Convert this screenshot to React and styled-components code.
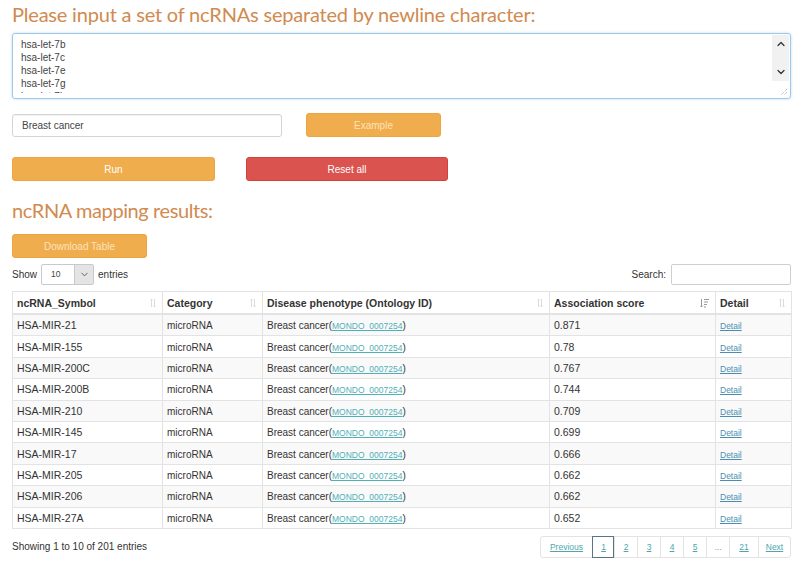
import React from 'react';
import styled, { createGlobalStyle } from 'styled-components';
import { ChevronUp, ChevronDown } from 'lucide-react';

const GlobalStyle = createGlobalStyle`
  body {
    margin: 0;
    background: #fff;
    font-family: "Liberation Sans", Arial, sans-serif;
    color: #333;
  }
`;

const Page = styled.div`
  width: 779px;
  padding: 3px 0 0 12px;
  display: flex;
  flex-direction: column;
`;

const Heading = styled.h2`
  font-family: "Lato", "Open Sans", sans-serif;
  font-weight: 400;
  font-size: 20px;
  line-height: 22px;
  color: #d18a4f;
  margin: ${(p) => p.$mt || 0}px 0 0 0;
  letter-spacing: ${(p) => p.$spacing || 0}px;
`;

const TextBox = styled.div`
  margin-top: 8px;
  height: 64px;
  border: 1px solid #9fc8e6;
  border-radius: 3px;
  box-shadow: 0 0 3px rgba(102, 175, 233, 0.45);
  display: flex;
  align-items: flex-start;
  position: relative;
  overflow: hidden;
`;

const TextLines = styled.div`
  flex: 1;
  margin-top: 4px;
  height: 55px;
  padding: 0 8px;
  font-size: 10px;
  line-height: 13px;
  color: #444;
  white-space: pre;
  overflow: hidden;
`;

const ScrollBar = styled.div`
  width: 17px;
  height: 46px;
  margin: 1px 1px 0 0;
  background: #f1f1f1;
  display: flex;
  flex-direction: column;
  justify-content: space-between;
  align-items: center;
  padding: 3px 0;
  box-sizing: border-box;
  color: #333;
`;

const Grip = styled.svg`
  position: absolute;
  right: 2px;
  bottom: 2px;
`;

const Row = styled.div`
  display: flex;
  align-items: center;
  gap: ${(p) => p.$gap}px;
  margin-top: ${(p) => p.$mt}px;
`;

const TextInput = styled.div`
  width: 270px;
  height: 23px;
  box-sizing: border-box;
  border: 1px solid #d4d4d4;
  border-radius: 3px;
  font-size: 10px;
  line-height: 21px;
  padding-left: 9px;
  color: #444;
  box-shadow: inset 0 1px 1px rgba(0, 0, 0, 0.06);
`;

const Button = styled.div`
  width: ${(p) => p.$w}px;
  height: 24px;
  box-sizing: border-box;
  border-radius: 3px;
  background: ${(p) => (p.$danger ? '#da534f' : '#f0ad4e')};
  border: 1px solid ${(p) => (p.$danger ? '#d43f3a' : '#eea43f')};
  color: ${(p) => (p.$faded ? '#fde2bd' : '#fff')};
  font-size: 10px;
  line-height: 23px;
  text-align: center;
`;

const Toolbar = styled.div`
  display: flex;
  justify-content: space-between;
  align-items: center;
  margin-top: 6px;
  font-size: 10px;
  color: #333;
`;

const Inline = styled.div`
  display: flex;
  align-items: center;
  gap: ${(p) => p.$gap || 5}px;
`;

const Select = styled.div`
  width: 53px;
  height: 21px;
  box-sizing: border-box;
  border: 1px solid #c9c9c9;
  border-radius: 2px;
  display: flex;
  font-size: 8.5px;
  color: #444;
`;

const SelectValue = styled.div`
  flex: 1;
  padding-left: 9px;
  line-height: 19px;
`;

const SelectArrow = styled.div`
  width: 18px;
  background: #e4e4e4;
  border-left: 1px solid #c9c9c9;
  display: flex;
  align-items: center;
  justify-content: center;
  color: #555;
`;

const SearchBox = styled.div`
  width: 120px;
  height: 21px;
  box-sizing: border-box;
  border: 1px solid #cfcfcf;
  border-radius: 2px;
`;

const Table = styled.table`
  margin-top: 6px;
  width: 779px;
  border-collapse: collapse;
  table-layout: fixed;
  font-size: 10.5px;
  color: #333;
`;

const Th = styled.th`
  height: 21px;
  border: 1px solid #e3e3e3;
  border-bottom: 2px solid #e3e3e3;
  text-align: left;
  padding: 0 4px;
  font-weight: 700;
  position: relative;
`;

const SortIcon = styled.svg`
  position: absolute;
  right: 6px;
  top: 6px;
`;

const Td = styled.td`
  height: 20.4px;
  border: 1px solid #e3e3e3;
  padding: 0 4px;
  background: ${(p) => (p.$odd ? '#f9f9f9' : '#fff')};
  white-space: nowrap;
  overflow: hidden;
`;

const Phrase = styled.span`
  font-size: 10px;
`;

const SmallLink = styled.a`
  font-size: 8.5px;
  color: ${(p) => p.$color || '#4fb0b8'};
  text-decoration: underline;
`;

const Footer = styled.div`
  display: flex;
  justify-content: space-between;
  align-items: center;
  margin-top: 7px;
  font-size: 10px;
`;

const Pager = styled.div`
  display: flex;
  border: 1px solid #e3e3e3;
  border-radius: 3px;
  height: 22px;
  box-sizing: border-box;
`;

const PageItem = styled.div`
  width: ${(p) => p.$w}px;
  box-sizing: border-box;
  border-left: ${(p) => (p.$first ? 'none' : '1px solid #e3e3e3')};
  font-size: 8.5px;
  text-align: center;
  color: #4fa6ad;
  text-decoration: ${(p) => (p.$plain ? 'none' : 'underline')};
  outline: ${(p) => (p.$active ? '1px solid #5a7388' : 'none')};
  outline-offset: -1px;
  position: relative;
  top: ${(p) => (p.$active ? '-1px' : '0')};
  height: ${(p) => (p.$active ? '22px' : '20px')};
  line-height: ${(p) => (p.$active ? '22px' : '20px')};
`;

const SortBoth = () => (
  <SortIcon width="6" height="10" viewBox="0 0 6 10">
    <path d="M1.5 1v8M0.3 2.3L1.5 1l1.2 1.3M4.5 9V1M3.3 7.7L4.5 9l1.2-1.3" stroke="#dcdcdc" strokeWidth="1" fill="none" />
  </SortIcon>
);

const SortDesc = () => (
  <SortIcon width="9" height="10" viewBox="0 0 9 10">
    <path d="M1.5 1v8M0.3 7.7L1.5 9l1.2-1.3" stroke="#999" strokeWidth="1" fill="none" />
    <path d="M4 1.5h5M4 4h4M4 6.5h3M4 9h2" stroke="#999" strokeWidth="1" fill="none" />
  </SortIcon>
);

const rows = [
  ['HSA-MIR-21', '0.871'],
  ['HSA-MIR-155', '0.78'],
  ['HSA-MIR-200C', '0.767'],
  ['HSA-MIR-200B', '0.744'],
  ['HSA-MIR-210', '0.709'],
  ['HSA-MIR-145', '0.699'],
  ['HSA-MIR-17', '0.666'],
  ['HSA-MIR-205', '0.662'],
  ['HSA-MIR-206', '0.662'],
  ['HSA-MIR-27A', '0.652'],
];

const columns = [
  { label: 'ncRNA_Symbol', w: 150 },
  { label: 'Category', w: 100 },
  { label: 'Disease phenotype (Ontology ID)', w: 287 },
  { label: 'Association score', w: 166, sorted: true },
  { label: 'Detail', w: 76 },
];

const pages = [
  { label: 'Previous', w: 51, first: true },
  { label: '1', w: 22, active: true },
  { label: '2', w: 23 },
  { label: '3', w: 23 },
  { label: '4', w: 23 },
  { label: '5', w: 23 },
  { label: '...', w: 23, plain: true },
  { label: '21', w: 29 },
  { label: 'Next', w: 32 },
];

export default function App() {
  return (
    <Page>
      <GlobalStyle />
      <Heading $spacing={-0.2}>Please input a set of ncRNAs separated by newline character:</Heading>
      <TextBox>
        <TextLines>{'hsa-let-7b\nhsa-let-7c\nhsa-let-7e\nhsa-let-7g\nhsa-let-7i'}</TextLines>
        <ScrollBar>
          <ChevronUp size={12} strokeWidth={2.5} />
          <ChevronDown size={12} strokeWidth={2.5} />
        </ScrollBar>
        <Grip width="8" height="8" viewBox="0 0 8 8">
          <path d="M7 1L1 7M7 4L4 7" stroke="#aaa" strokeWidth="1" strokeDasharray="1 1" />
        </Grip>
      </TextBox>
      <Row $gap={24} $mt={14}>
        <TextInput>Breast cancer</TextInput>
        <Button $w={135} $faded>Example</Button>
      </Row>
      <Row $gap={31} $mt={20}>
        <Button $w={203}>Run</Button>
        <Button $w={202} $danger>Reset all</Button>
      </Row>
      <Heading $mt={18} $spacing={-0.4}>ncRNA mapping results:</Heading>
      <Row $gap={0} $mt={13}>
        <Button $w={135} $faded>Download Table</Button>
      </Row>
      <Toolbar>
        <Inline $gap={4}>
          <span>Show</span>
          <Select>
            <SelectValue>10</SelectValue>
            <SelectArrow>
              <ChevronDown size={11} strokeWidth={2} />
            </SelectArrow>
          </Select>
          <span>entries</span>
        </Inline>
        <Inline $gap={5}>
          <span>Search:</span>
          <SearchBox />
        </Inline>
      </Toolbar>
      <Table>
        <colgroup>
          {columns.map((c) => (
            <col key={c.label} style={{ width: c.w }} />
          ))}
        </colgroup>
        <thead>
          <tr>
            {columns.map((c) => (
              <Th key={c.label}>
                {c.label}
                {c.sorted ? <SortDesc /> : <SortBoth />}
              </Th>
            ))}
          </tr>
        </thead>
        <tbody>
          {rows.map(([sym, score], i) => (
            <tr key={sym}>
              <Td $odd={i % 2 === 0}>{sym}</Td>
              <Td $odd={i % 2 === 0}><Phrase>microRNA</Phrase></Td>
              <Td $odd={i % 2 === 0}>
                <Phrase>Breast cancer(<SmallLink>MONDO_0007254</SmallLink>)</Phrase>
              </Td>
              <Td $odd={i % 2 === 0}>{score}</Td>
              <Td $odd={i % 2 === 0}>
                <SmallLink $color="#4a8fb3">Detail</SmallLink>
              </Td>
            </tr>
          ))}
        </tbody>
      </Table>
      <Footer>
        <span>Showing 1 to 10 of 201 entries</span>
        <Pager>
          {pages.map((p) => (
            <PageItem key={p.label} $w={p.w} $first={p.first} $active={p.active} $plain={p.plain}>
              {p.label}
            </PageItem>
          ))}
        </Pager>
      </Footer>
    </Page>
  );
}
